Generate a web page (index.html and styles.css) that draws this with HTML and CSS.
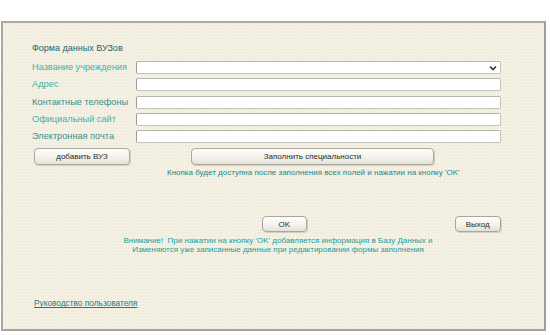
FILE: index.html
```html
<!DOCTYPE html>
<html lang="ru">
<head>
<meta charset="utf-8">
<title>Форма данных ВУЗов</title>
<link rel="stylesheet" href="styles.css">
</head>
<body>
<div class="panel">
  <div class="title">Форма данных ВУЗов</div>
  <div class="form">
    <label class="lbl light">Название учреждения</label>
    <div class="field select"><svg class="chev" width="8" height="6" viewBox="0 0 8 6"><path d="M1 1.5 L4 4.5 L7 1.5" fill="none" stroke="#333" stroke-width="1.6"/></svg></div>
    <label class="lbl light">Адрес</label>
    <div class="field"></div>
    <label class="lbl dark">Контактные телефоны</label>
    <div class="field"></div>
    <label class="lbl light">Официальный сайт</label>
    <div class="field"></div>
    <label class="lbl dark">Электронная почта</label>
    <div class="field"></div>
  </div>
  <div class="btnrow">
    <button class="btn add">добавить ВУЗ</button>
    <button class="btn spec">Заполнить специальности</button>
  </div>
  <div class="hint">Кнопка будет доступна после заполнения всех полей и нажатии на кнопку 'OK'</div>
  <div class="okrow">
    <button class="btn ok">OK</button>
    <button class="btn exit">Выход</button>
  </div>
  <div class="notice">Внимание!&nbsp; При нажатии на кнопку 'OK' добавляется информация в Базу Данных и<br>Изменяются уже записанные данные при редактировании формы заполнения</div>
  <a class="guide" href="#">Руководство пользователя</a>
</div>
</body>
</html>
```
FILE: styles.css
```css
html, body {
  margin: 0;
  padding: 0;
  background: #ffffff;
}
body {
  width: 550px;
  height: 335px;
  overflow: hidden;
  font-family: "Liberation Sans", Arial, sans-serif;
}
.panel {
  box-sizing: border-box;
  margin: 21px 4px 0 1px;
  width: 545px;
  height: 310px;
  border: 2px solid #aaa9a2;
  border-right-color: #9e9d96;
  border-bottom-color: #a6a59e;
  background-color: #f1eee0;
  background-image: radial-gradient(circle, #fbf9f1 0.7px, transparent 0.9px);
  background-size: 3px 3px;
  padding: 20px 43px 0 29px;
  display: flex;
  flex-direction: column;
}
.title {
  font-size: 9px;
  line-height: 10px;
  color: #1d6470;
  height: 10px;
}
.form {
  margin-top: 8px;
  display: grid;
  grid-template-columns: 104px 1fr;
  grid-auto-rows: 13px;
  row-gap: 4.25px;
  align-items: center;
}
.lbl {
  font-size: 9.2px;
  line-height: 13px;
  white-space: nowrap;
}
.lbl.light { color: #3fb0a6; }
.lbl.dark { color: #3c8c8e; }
.field {
  box-sizing: border-box;
  height: 13px;
  background: #ffffff;
  border: 1px solid #c4c3bb;
  border-left-color: #9d9c95;
  border-top-color: #b6b5ae;
  border-radius: 2px;
  position: relative;
}
.select {
  display: flex;
  align-items: center;
  justify-content: flex-end;
  padding-right: 3px;
}
.chev { display: block; }
.btnrow {
  margin-top: 5px;
  display: flex;
  height: 17px;
}
.btn {
  box-sizing: border-box;
  font-family: "Liberation Sans", Arial, sans-serif;
  font-size: 8px;
  color: #2a2a2a;
  padding: 0;
  border: 1px solid #a9a79d;
  border-radius: 4px;
  background: linear-gradient(#fdfdfa 0%, #f5f4ee 50%, #e4e2d6 100%);
  box-shadow: 1px 1px 0 #d2d0c6;
}
.add { width: 96px; margin-left: 2px; }
.spec { width: 243px; margin-left: 61px; }
.hint {
  margin-top: 3px;
  margin-left: 135px;
  font-size: 8px;
  line-height: 10px;
  color: #1b8685;
  white-space: nowrap;
}
.okrow {
  margin-top: 38px;
  display: flex;
  height: 16px;
}
.ok { width: 45px; margin-left: 230px; }
.exit { width: 47px; margin-left: 148px; }
.notice {
  margin-top: 5px;
  width: 320px;
  margin-left: 86px;
  text-align: center;
  font-size: 8px;
  line-height: 8.7px;
  color: #1c9e9c;
  white-space: nowrap;
}
.guide {
  margin-top: 44px;
  margin-left: 2px;
  align-self: flex-start;
  font-size: 8.3px;
  line-height: 10px;
  color: #1b7c84;
  text-decoration: underline;
}
```
